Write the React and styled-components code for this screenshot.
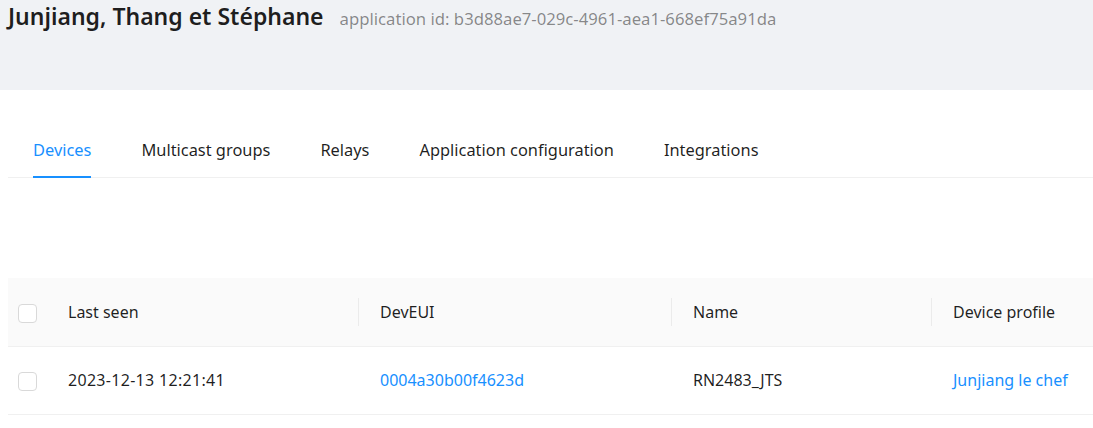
import React from 'react';
import styled, { createGlobalStyle } from 'styled-components';

const GlobalStyle = createGlobalStyle`
  body {
    margin: 0;
    background: #fff;
    font-family: "Noto Sans", "Open Sans", sans-serif;
    color: rgba(0, 0, 0, 0.88);
    overflow: hidden;
  }
`;

const Page = styled.div`
  width: 1093px;
  height: 428px;
  overflow: hidden;
`;

const Header = styled.div`
  height: 90px;
  background: #f0f2f5;
  padding: 0 8px;
  box-sizing: border-box;
  display: flow-root;
`;

const TitleRow = styled.div`
  display: flex;
  align-items: baseline;
  gap: 16px;
`;

const Title = styled.h1`
  margin: 0;
  font-size: 23px;
  font-weight: 600;
  line-height: 32px;
  color: rgba(0, 0, 0, 0.88);
`;

const SubTitle = styled.span`
  font-size: 16.7px;
  color: rgba(0, 0, 0, 0.45);
`;

const Content = styled.div`
  padding: 31px 0 0 8px;
`;

const TabBar = styled.div`
  display: flex;
  gap: 50px;
  padding-left: 25px;
  border-bottom: 1px solid #f0f0f0;
`;

const Tab = styled.div`
  position: relative;
  padding: 17px 0 15px;
  font-size: 16.4px;
  line-height: 24px;
  white-space: nowrap;
  color: ${(props) => (props.active ? '#1890ff' : 'rgba(0, 0, 0, 0.88)')};

  &::after {
    content: '';
    display: ${(props) => (props.active ? 'block' : 'none')};
    position: absolute;
    left: 0;
    right: 0;
    bottom: -1px;
    height: 2px;
    background: #1890ff;
  }
`;

const Table = styled.table`
  width: 100%;
  margin-top: 100px;
  border-collapse: collapse;
  table-layout: fixed;
  font-size: 16px;
`;

const TH = styled.th`
  position: relative;
  height: 68px;
  padding: 0 21px;
  text-align: left;
  font-weight: 400;
  background: #fafafa;
  border-bottom: 1px solid #f0f0f0;
  box-sizing: border-box;

  &::after {
    content: '';
    display: ${(props) => (props.divider ? 'block' : 'none')};
    position: absolute;
    right: 0;
    top: 50%;
    height: 28px;
    width: 1px;
    transform: translateY(-50%);
    background: #ebebeb;
  }
`;

const TD = styled.td`
  height: 68px;
  padding: 0 21px;
  border-bottom: 1px solid #f0f0f0;
  color: ${(props) => (props.link ? '#1890ff' : 'rgba(0, 0, 0, 0.88)')};
  white-space: nowrap;
  letter-spacing: ${(props) => (props.digits ? '0.3px' : '0')};
  box-sizing: border-box;
`;

const CheckCell = styled.td`
  padding: 0;
  text-align: center;
  background: ${(props) => (props.head ? '#fafafa' : '#fff')};
  border-bottom: 1px solid #f0f0f0;
`;

const Checkbox = styled.span`
  display: inline-block;
  width: 19px;
  height: 19px;
  border: 1px solid #d9d9d9;
  border-radius: 4px;
  background: #fff;
  box-sizing: border-box;
  vertical-align: middle;
`;

const tabs = [
  'Devices',
  'Multicast groups',
  'Relays',
  'Application configuration',
  'Integrations',
];

const devices = [
  {
    lastSeen: '2023-12-13 12:21:41',
    devEui: '0004a30b00f4623d',
    name: 'RN2483_JTS',
    profile: 'Junjiang le chef',
  },
];

const App = () => (
  <Page>
    <GlobalStyle />
    <Header>
      <TitleRow>
        <Title>Junjiang, Thang et Stéphane</Title>
        <SubTitle>application id: b3d88ae7-029c-4961-aea1-668ef75a91da</SubTitle>
      </TitleRow>
    </Header>
    <Content>
      <TabBar>
        {tabs.map((t, i) => (
          <Tab key={t} active={i === 0}>
            {t}
          </Tab>
        ))}
      </TabBar>
      <Table>
        <colgroup>
          <col style={{ width: 39 }} />
          <col style={{ width: 312 }} />
          <col style={{ width: 313 }} />
          <col style={{ width: 260 }} />
          <col />
        </colgroup>
        <thead>
          <tr>
            <CheckCell as="th" head>
              <Checkbox />
            </CheckCell>
            <TH divider>Last seen</TH>
            <TH divider>DevEUI</TH>
            <TH divider>Name</TH>
            <TH>Device profile</TH>
          </tr>
        </thead>
        <tbody>
          {devices.map((d) => (
            <tr key={d.devEui}>
              <CheckCell>
                <Checkbox />
              </CheckCell>
              <TD digits>{d.lastSeen}</TD>
              <TD link>{d.devEui}</TD>
              <TD>{d.name}</TD>
              <TD link>{d.profile}</TD>
            </tr>
          ))}
        </tbody>
      </Table>
    </Content>
  </Page>
);

export default App;
